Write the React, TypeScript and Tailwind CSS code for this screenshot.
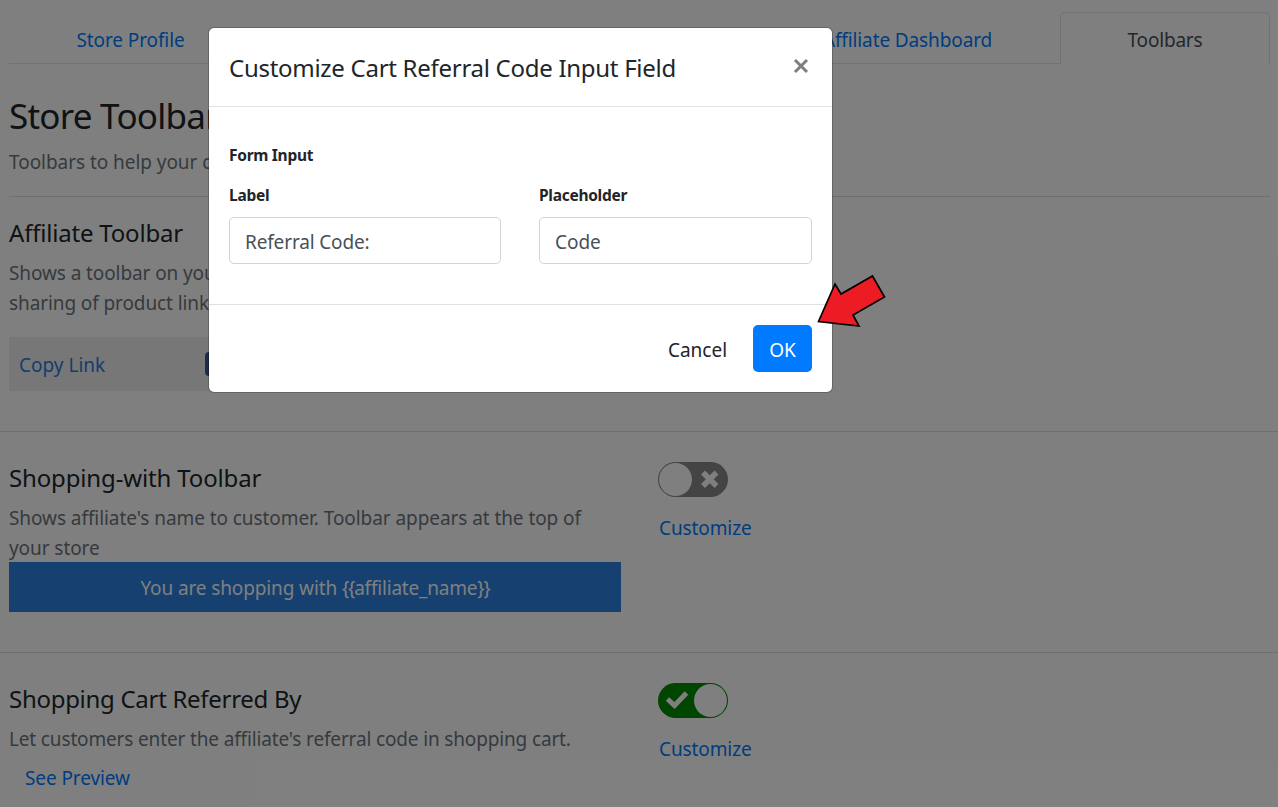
import React from "react";

function Toggle({ on }: { on?: boolean }) {
  return (
    <svg width="70" height="36" viewBox="0 0 70 36" className="block" role="img">
      <rect x="0" y="1" width="70" height="35" rx="17.5" fill={on ? "#008c00" : "#888888"} />
      <circle cx={on ? 52.5 : 17.5} cy="18.5" r="16.5" fill="#ffffff" />
      {on ? (
        <path d="M9.5 17 L16.5 23.5 L28.5 11" fill="none" stroke="#ffffff" strokeWidth="5" />
      ) : (
        <path d="M45 11.5 L58.5 25 M58.5 11.5 L45 25" fill="none" stroke="#ffffff" strokeWidth="5.6" />
      )}
    </svg>
  );
}

function Heading({ children }: { children: React.ReactNode }) {
  return <h2 className="h-[37px] whitespace-nowrap text-[24px] leading-[37px] text-[#212529]">{children}</h2>;
}

export default function App() {
  return (
    <div className="relative h-[807px] w-[1278px] overflow-hidden bg-white font-['Noto_Sans','Open_Sans',sans-serif] text-[19px] leading-[30px] text-[#212529]">
      <nav className="flex pl-[9px] pr-2 pt-3 text-[#007bff]">
        <div className="flex h-[52px] w-[243px] items-center justify-center border-b border-[#dee2e6] pt-[4px]">
          <span className="whitespace-nowrap tracking-[-0.1px]">Store Profile</span>
        </div>
        <div className="flex-1 border-b border-[#dee2e6]" />
        <div className="flex h-[52px] w-[304px] items-center justify-center border-b border-[#dee2e6] pr-px pt-[4px]">
          <span className="whitespace-nowrap tracking-[-0.12px]">Affiliate Dashboard</span>
        </div>
        <div className="flex h-[52px] w-[210px] items-center justify-center rounded-t-[5px] border-x border-t border-[#dee2e6] pt-[2px] text-[#495057]">
          <span className="whitespace-nowrap tracking-[-0.2px]">Toolbars</span>
        </div>
      </nav>

      <header className="ml-[9px] mr-2 h-[133px] border-b border-[#dedede] pt-[30px]">
        <h1 className="h-[44px] text-[35px] leading-[44px] tracking-[-0.75px]">Store Toolbar</h1>
        <p className="pt-[9px] tracking-[-0.05px] text-[#6c757d]">Toolbars to help your c</p>
      </header>

      <section className="h-[235px] border-b border-[#dedede] px-[9px] pt-[17px]">
        <Heading><span className="tracking-[-0.2px]">Affiliate Toolbar</span></Heading>
        <p className="w-[612px] pt-[7px] tracking-[-0.1px] text-[#6c757d]">
          Shows a toolbar on you
          <br />
          sharing of product link
        </p>
        <div className="mt-[19px] flex h-[54px] w-[612px] items-center bg-[#eeeeee] pl-[10px]">
          <a className="w-[186px] whitespace-nowrap pt-[2px] text-[#2d7bd8]">Copy Link</a>
          <span className="h-[24px] w-[40px] rounded-[4px] bg-[#3b5998]" />
        </div>
      </section>

      <section className="flex h-[221px] border-b border-[#dedede] px-[9px]">
        <div className="w-[649px] pt-[27px]">
          <Heading><span className="tracking-[-0.15px]">Shopping-with Toolbar</span></Heading>
          <p className="w-[612px] pt-[7px] tracking-[-0.07px] text-[#6c757d]">
            Shows affiliate's name to customer. Toolbar appears at the top of
            <br />
            your store
          </p>
          <div className="-mt-px flex h-[50px] w-[612px] items-center justify-center bg-[#2a80e0] pt-[2px] text-white">
            <p className="whitespace-nowrap tracking-[-0.12px]">
              You are shopping with <span className="tracking-[-1.1px]">{"{{"}</span>
              <span className="tracking-[-0.2px]">affiliate_name</span>
              <span className="tracking-[-1.1px]">{"}}"}</span>
            </p>
          </div>
        </div>
        <div className="pt-[29px]">
          <Toggle />
          <a className="block pl-px pt-[16px] tracking-[-0.1px] text-[#007bff]">Customize</a>
        </div>
      </section>

      <section className="flex px-[9px]">
        <div className="w-[649px] pt-[27px]">
          <Heading><span className="tracking-[-0.29px]">Shopping Cart Referred By</span></Heading>
          <p className="pt-[7px] tracking-[-0.15px] text-[#6c757d]">Let customers enter the affiliate's referral code in shopping cart.</p>
          <a className="block pl-[16px] pt-[9px] tracking-[-0.1px] text-[#007bff]">See Preview</a>
        </div>
        <div className="pt-[29px]">
          <Toggle on />
          <a className="block pl-px pt-[16px] tracking-[-0.1px] text-[#007bff]">Customize</a>
        </div>
      </section>

      <div className="absolute inset-0 bg-black/50 pl-[208px] pt-[27px]">
        <div className="h-[366px] w-[625px] rounded-[6px] border border-black/20 bg-white bg-clip-padding">
          <div className="flex h-[79px] justify-between border-b border-[#dee2e6] px-5">
            <h3 className="whitespace-nowrap pt-[22px] text-[24px] leading-[36px] tracking-[-0.28px]">Customize Cart Referral Code Input Field</h3>
            <svg className="mr-[3px] mt-[30px]" width="16" height="16" viewBox="0 0 16 16">
              <path d="M2 2 L14 14 M14 2 L2 14" stroke="#7f7f7f" strokeWidth="3" fill="none" />
            </svg>
          </div>
          <div className="h-[198px] border-b border-[#dee2e6] px-5 pt-[33px] text-[15.5px] font-bold tracking-[-0.28px]">
            <div className="h-[30px] leading-[30px]">Form Input</div>
            <div className="mt-[10px] flex gap-[38px]">
              <label className="block w-[272px]">
                Label
                <span className="mt-[7px] flex h-[47px] items-center rounded-[5px] border border-[#ced4da] pl-[15px] pt-[2px] text-[19px] font-normal tracking-[-0.15px] text-[#495057]">
                  Referral Code:
                </span>
              </label>
              <label className="block w-[273px]">
                Placeholder
                <span className="mt-[7px] flex h-[47px] items-center rounded-[5px] border border-[#ced4da] pl-[15px] pt-[2px] text-[19px] font-normal tracking-[-0.05px] text-[#495057]">
                  Code
                </span>
              </label>
            </div>
          </div>
          <div className="flex justify-end px-5 pt-5">
            <button className="mr-[10px] h-[47px] w-[91px] pt-[2px]">Cancel</button>
            <button className="h-[47px] w-[59px] rounded-[5px] bg-[#007bff] pt-[2px] text-white">OK</button>
          </div>
        </div>
      </div>

      <svg className="absolute left-[812px] top-[270px]" width="80" height="62" viewBox="812 270 80 62">
        <path d="M818.5 321.5 L835 284 L841 294 L872.5 276 L884.5 297 L853 315 L859 326 Z" fill="#ed1c24" stroke="#000000" strokeWidth="1.7" />
      </svg>
    </div>
  );
}
